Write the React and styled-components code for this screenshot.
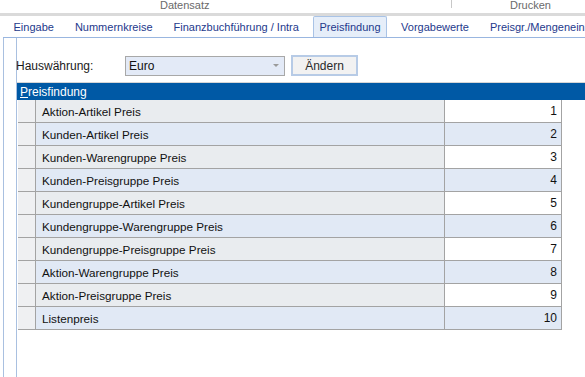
import React from "react";
import styled, { createGlobalStyle } from "styled-components";

const GlobalStyle = createGlobalStyle`
    body {
        margin: 0;
        background: #ffffff;
        font-family: "Liberation Sans", Arial, sans-serif;
        font-size: 12px;
    }
`;

const StyledPage = styled.div`
    width: 585px;
    height: 377px;
    overflow: hidden;
    background: #ffffff;
    display: flex;
    flex-direction: column;
`;

const StyledRibbon = styled.div`
    height: 13px;
    display: flex;
    color: #6a6a6a;
    font-size: 11px;
    line-height: 11px;
`;

const StyledRibbonGroup = styled.div`
    width: ${(p) => p.width}px;
    padding-left: ${(p) => p.offset}px;
    box-sizing: border-box;
    white-space: nowrap;
`;

const StyledRibbonDivider = styled.div`
    width: 1px;
    height: 8px;
    background: #c8c8c8;
`;

const StyledSplitter = styled.div`
    height: 3px;
    background: #dadada;
`;

const StyledTabBar = styled.div`
    height: 21px;
    display: flex;
    align-items: stretch;
    border-bottom: 1px solid #99b6e0;
    margin-left: 3px;
    font-size: 11px;
    overflow: hidden;
`;

const StyledTab = styled.div`
    padding: 0 ${(p) => (p.active ? 5 : 9.5)}px;
    margin: 0 ${(p) => (p.active ? 4 : 0)}px;
    display: flex;
    align-items: center;
    white-space: nowrap;
    color: #24398c;
    background: ${(p) => (p.active ? "#e6eef9" : "transparent")};
    border: 1px solid ${(p) => (p.active ? "#a9c3e6" : "transparent")};
    border-bottom: none;
    border-radius: 2px 2px 0 0;
    box-sizing: border-box;
`;

const StyledBody = styled.div`
    flex: 1;
    display: flex;
`;

const StyledSideFrame = styled.div`
    width: 12px;
    margin-left: 3px;
    border-left: 1px solid #a9c0e0;
    border-right: 1px solid #a9c0e0;
`;

const StyledContent = styled.div`
    flex: 1;
    display: flex;
    flex-direction: column;
`;

const StyledFormRow = styled.div`
    display: flex;
    align-items: center;
    height: 21px;
    margin-top: 17px;
    margin-left: -1px;
`;

const StyledLabel = styled.div`
    width: 109px;
    color: #1a1a1a;
`;

const StyledCombo = styled.div`
    width: 160px;
    height: 20px;
    box-sizing: border-box;
    border: 1px solid #a8a8a8;
    background: #e3eaf7;
    display: flex;
    align-items: center;
    justify-content: space-between;
    padding: 0 5px 0 3px;
    color: #111;
`;

const StyledArrow = styled.span`
    width: 0;
    height: 0;
    border-left: 3px solid transparent;
    border-right: 3px solid transparent;
    border-top: 3px solid #9a9a9a;
`;

const StyledButton = styled.div`
    width: 67px;
    height: 21px;
    box-sizing: border-box;
    margin-left: 6px;
    border: 2px solid #b7cbe6;
    background: #f2f2f2;
    color: #2a2a2a;
    display: flex;
    align-items: center;
    justify-content: center;
`;

const StyledGroup = styled.div`
    margin-top: 6px;
    border-top: 1px solid #d6d6d6;
`;

const StyledGroupHeader = styled.div`
    height: 17px;
    background: #0059a5;
    color: #ffffff;
    padding-left: 3px;
    display: flex;
    align-items: center;
`;

const StyledAccess = styled.span`
    text-decoration: underline;
`;

const StyledTable = styled.div`
    margin-left: 1px;
    width: 544px;
    display: flex;
    flex-direction: column;
`;

const StyledRow = styled.div`
    display: grid;
    grid-template-columns: 18px 409px 117px;
    height: 23px;
    border-bottom: 1px solid #a3a3a3;
    box-sizing: border-box;
`;

const StyledRowHead = styled.div`
    background: #eff0f2;
    border-right: 1px solid #a3a3a3;
`;

const StyledNameCell = styled.div`
    background: ${(p) => (p.even ? "#e1e9f5" : "#e9ecef")};
    border-right: 1px solid #a3a3a3;
    padding-left: 6px;
    display: flex;
    align-items: center;
    color: #111;
    font-size: 11.7px;
`;

const StyledValueCell = styled.div`
    background: ${(p) => (p.even ? "#e1e9f5" : "#ffffff")};
    border-right: 1px solid #a3a3a3;
    padding-right: 4px;
    display: flex;
    align-items: center;
    justify-content: flex-end;
    color: #111;
`;

const tabs = [
    "Eingabe",
    "Nummernkreise",
    "Finanzbuchführung / Intra",
    "Preisfindung",
    "Vorgabewerte",
    "Preisgr./Mengeneinheiten",
];

const rows = [
    "Aktion-Artikel Preis",
    "Kunden-Artikel Preis",
    "Kunden-Warengruppe Preis",
    "Kunden-Preisgruppe Preis",
    "Kundengruppe-Artikel Preis",
    "Kundengruppe-Warengruppe Preis",
    "Kundengruppe-Preisgruppe Preis",
    "Aktion-Warengruppe Preis",
    "Aktion-Preisgruppe Preis",
    "Listenpreis",
];

const App = () => {
    return (
        <StyledPage>
            <GlobalStyle />
            <StyledRibbon>
                <StyledRibbonGroup width={451} offset={160}>
                    Datensatz
                </StyledRibbonGroup>
                <StyledRibbonDivider />
                <StyledRibbonGroup width={133} offset={58}>
                    Drucken
                </StyledRibbonGroup>
            </StyledRibbon>
            <StyledSplitter />
            <StyledTabBar>
                {tabs.map((t) => (
                    <StyledTab key={t} active={t === "Preisfindung"}>
                        {t}
                    </StyledTab>
                ))}
            </StyledTabBar>
            <StyledBody>
                <StyledSideFrame />
                <StyledContent>
                    <StyledFormRow>
                        <StyledLabel>Hauswährung:</StyledLabel>
                        <StyledCombo>
                            Euro
                            <StyledArrow />
                        </StyledCombo>
                        <StyledButton>Ändern</StyledButton>
                    </StyledFormRow>
                    <StyledGroup>
                        <StyledGroupHeader>
                            <span>
                                <StyledAccess>P</StyledAccess>reisfindung
                            </span>
                        </StyledGroupHeader>
                        <StyledTable>
                            {rows.map((r, i) => (
                                <StyledRow key={r}>
                                    <StyledRowHead />
                                    <StyledNameCell even={i % 2 === 1}>{r}</StyledNameCell>
                                    <StyledValueCell even={i % 2 === 1}>{i + 1}</StyledValueCell>
                                </StyledRow>
                            ))}
                        </StyledTable>
                    </StyledGroup>
                </StyledContent>
            </StyledBody>
        </StyledPage>
    );
};

export default App;
